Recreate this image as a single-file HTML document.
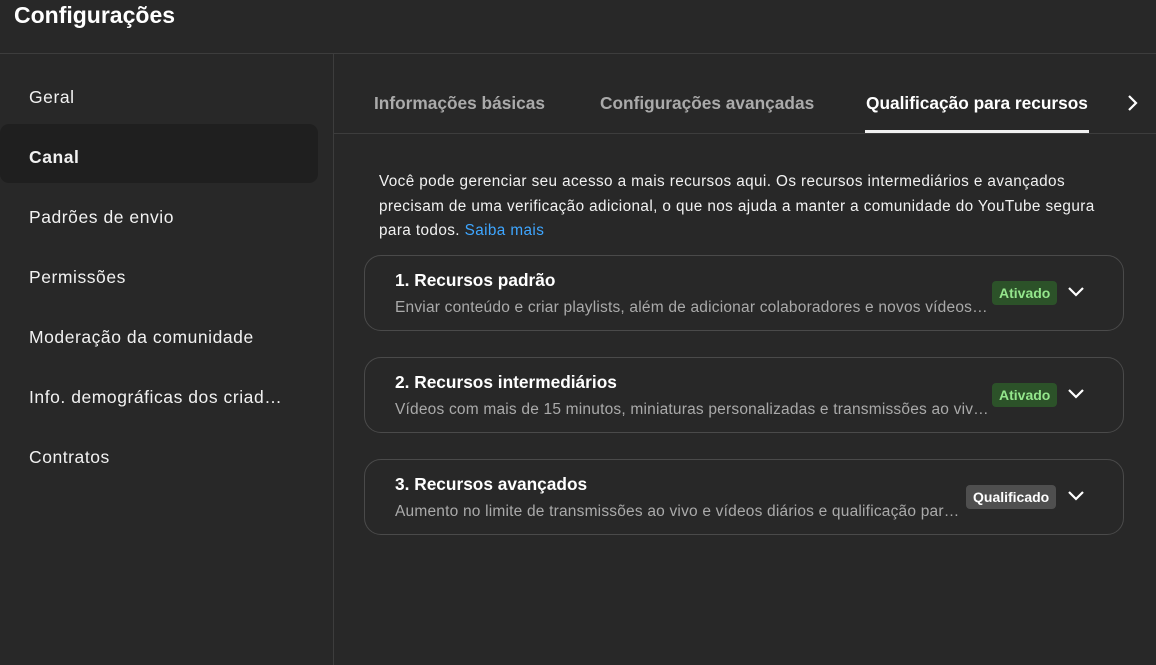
<!DOCTYPE html>
<html><head><meta charset="utf-8"><style>
*{margin:0;padding:0;box-sizing:border-box}
body{width:1156px;height:665px;background:#282828;font-family:"Liberation Sans",Arial,sans-serif;color:#f1f1f1;position:relative;overflow:hidden}
.h{position:absolute;left:14px;top:2px;font-size:23px;font-weight:bold;color:#fff}
.hl{position:absolute;left:0;top:53px;width:1156px;height:1px;background:#3d3d3d}
.vl{position:absolute;left:333px;top:54px;width:1px;height:611px;background:#3d3d3d}
.side div{position:absolute;left:29px;font-size:17.5px;letter-spacing:0.55px;color:#f1f1f1;white-space:nowrap}
.sel{position:absolute;left:0;top:124px;width:318px;height:59px;background:#1f1f1f;border-radius:9px}
.tab{position:absolute;top:93px;font-size:17.3px;font-weight:bold;color:#aaa;white-space:nowrap}
.tl{position:absolute;left:334px;top:133px;width:822px;height:1px;background:#3d3d3d}
.ul{position:absolute;left:865px;top:130px;width:224px;height:3px;background:#f1f1f1}
.p{position:absolute;left:379px;top:170px;font-size:15.3px;letter-spacing:0.4px;line-height:24.5px;color:#f1f1f1;white-space:nowrap}
.p a{color:#3ea6ff;text-decoration:none}
.card{position:absolute;left:364px;width:760px;height:76px;border:1px solid #4a4a4a;border-radius:17px}
.card .t{position:absolute;left:30px;top:14px;font-size:17.3px;font-weight:bold;color:#fff}
.card .s{position:absolute;left:30px;top:43px;font-size:15.5px;letter-spacing:0.2px;color:#aaa;white-space:nowrap;overflow:hidden;text-overflow:ellipsis}
.b{position:absolute;top:25px;height:24px;line-height:24px;padding:0 7px;border-radius:4px;font-size:14px;font-weight:bold}
.g{background:#2c5229;color:#94e68c;left:627px}
.q{background:#4f4f4f;color:#fff;left:601px}
.card svg{position:absolute;left:701px;top:29px}
</style></head><body>
<div class="h">Configurações</div>
<div class="hl"></div><div class="vl"></div>
<div class="sel"></div>
<div class="side">
<div style="top:87px">Geral</div>
<div style="top:147px;font-weight:bold">Canal</div>
<div style="top:207px">Padrões de envio</div>
<div style="top:267px">Permissões</div>
<div style="top:327px">Moderação da comunidade</div>
<div style="top:387px">Info. demográficas dos criad…</div>
<div style="top:447px">Contratos</div>
</div>
<div class="tab" style="left:374px">Informações básicas</div>
<div class="tab" style="left:600px">Configurações avançadas</div>
<div class="tab" style="left:866px;color:#fff">Qualificação para recursos</div>
<svg style="position:absolute;left:1124px;top:92px" width="18" height="22" viewBox="0 0 18 22"><path d="M5 4l7 7-7 7" stroke="#fff" stroke-width="2.2" fill="none"/></svg>
<div class="tl"></div><div class="ul"></div>
<div class="p">Você pode gerenciar seu acesso a mais recursos aqui. Os recursos intermediários e avançados<br>precisam de uma verificação adicional, o que nos ajuda a manter a comunidade do YouTube segura<br>para todos. <a>Saiba mais</a></div>

<div class="card" style="top:255px"><div class="t">1. Recursos padrão</div><div class="s" style="width:597px">Enviar conteúdo e criar playlists, além de adicionar colaboradores e novos vídeos…</div><div class="b g">Ativado</div><svg width="20" height="14" viewBox="0 0 20 14"><path d="M3 3l7 7 7-7" stroke="#fff" stroke-width="2.2" fill="none"/></svg></div>
<div class="card" style="top:357px"><div class="t">2. Recursos intermediários</div><div class="s" style="width:597px">Vídeos com mais de 15 minutos, miniaturas personalizadas e transmissões ao vivo…</div><div class="b g">Ativado</div><svg width="20" height="14" viewBox="0 0 20 14"><path d="M3 3l7 7 7-7" stroke="#fff" stroke-width="2.2" fill="none"/></svg></div>
<div class="card" style="top:459px"><div class="t">3. Recursos avançados</div><div class="s" style="width:572px">Aumento no limite de transmissões ao vivo e vídeos diários e qualificação para…</div><div class="b q">Qualificado</div><svg width="20" height="14" viewBox="0 0 20 14"><path d="M3 3l7 7 7-7" stroke="#fff" stroke-width="2.2" fill="none"/></svg></div>
</body></html>
